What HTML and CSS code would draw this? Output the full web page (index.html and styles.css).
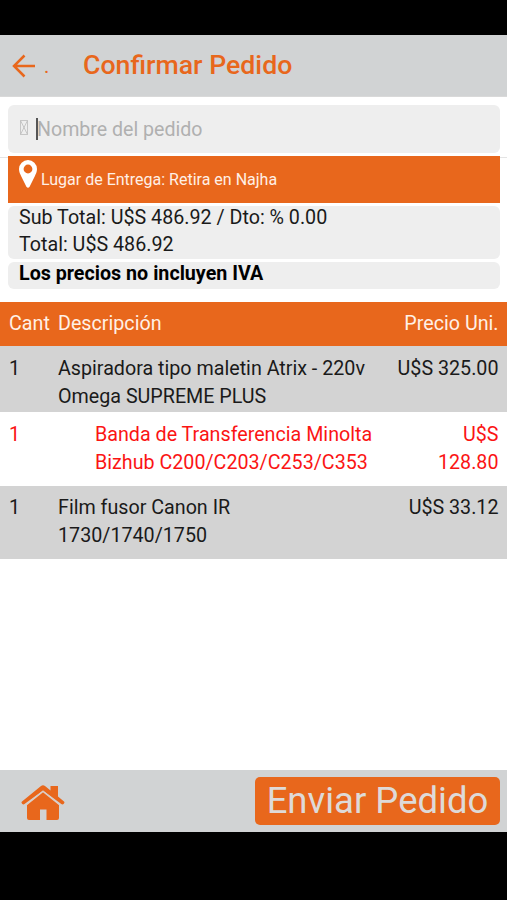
FILE: index.html
```html
<!DOCTYPE html>
<html lang="es">
<head>
<meta charset="utf-8">
<title>Confirmar Pedido</title>
<link rel="stylesheet" href="styles.css">
</head>
<body>
<div class="screen">
  <header class="topbar">
    <svg class="back" viewBox="0 0 24 24"><path d="M23 12H2M12.500 1.500L2 12l10.500 10.500"/></svg>
    <span class="dot">.</span>
    <h1>Confirmar Pedido</h1>
  </header>
  <main>
    <div class="field">
      <svg class="missing" viewBox="0 0 8 15"><path d="M.5.5h7v14h-7zL7.500 14.500M7.500.5L.5 14.500"/></svg>
      <span class="caret"></span>
      <span class="placeholder">Nombre del pedido</span>
    </div>
    <div class="divider"></div>
    <div class="delivery">
      <svg class="pin" viewBox="0 0 18 28"><path fill-rule="evenodd" d="M9 0a9 9 0 0 0-9 9c0 3 1.200 5 2.200 7.200L7.400 26.700q1.600 2.200 3.200 0L15.800 16.200C16.800 14 18 12 18 9a9 9 0 0 0-9-9zm0 4.600a4.400 4.400 0 1 1 0 8.800 4.400 4.400 0 0 1 0-8.800z"/></svg>
      <span>Lugar de Entrega: Retira en Najha</span>
    </div>
    <div class="totals">
      <div>Sub Total: U$S 486.92 / Dto: % 0.00</div>
      <div>Total: U$S 486.92</div>
    </div>
    <div class="notice">Los precios no incluyen IVA</div>
    <section class="items">
      <div class="row head"><span>Cant</span><span>Descripción</span><span class="price">Precio Uni.</span></div>
      <div class="row first"><span>1</span><span>Aspiradora tipo maletin Atrix - 220v<br>Omega SUPREME PLUS</span><span class="price">U$S 325.00</span></div>
      <div class="row offer"><span>1</span><span class="indent">Banda de Transferencia Minolta<br>Bizhub C200/C203/C253/C353</span><span class="price">U$S<br>128.80</span></div>
      <div class="row last"><span>1</span><span>Film fusor Canon IR<br>1730/1740/1750</span><span class="price">U$S 33.12</span></div>
    </section>
  </main>
  <footer>
    <svg class="home" viewBox="0 0 44 36"><path d="M6 19.500L22 6l16 13.500V33q0 2-2 2H25.500V24.500h-6.500V35H8q-2 0-2-2z"/><path d="M1 16.500L20 1q2-1.500 4 0l5.500 4.500V1h7.500v10.500l6 5q1 1-.2 2.200t-2.500.3L22 5.400 3.500 19q-1.200.9-2.400-.3t-.1-2.200z"/><path class="gap" d="M4.500 20.500L22 6.400 39.500 20.500"/></svg>
    <button class="send">Enviar Pedido</button>
  </footer>
</div>
</body>
</html>
```
FILE: styles.css
```css
* { box-sizing: border-box; }
body { margin: 0; background: #000; font-family: Roboto, "Liberation Sans", sans-serif; color: #1a1a1a; }
.screen { height: 900px; padding: 35px 0 68px; display: flex; flex-direction: column; white-space: nowrap; }
.topbar { height: 62px; flex: none; background: #d1d3d4; border-bottom: 1px solid #d9d9d9; display: flex; align-items: center; padding-left: 12px; color: #e8671c; }
.back { width: 24px; height: 24px; fill: none; stroke: #e8671c; stroke-width: 2.500; }
.dot { width: 39px; padding-left: 8px; font-size: 20px; line-height: 24px; }
h1 { margin: -2px 0 0 8px; font-size: 26.700px; font-weight: 500; line-height: 30px; }
main { flex: 1; background: #fff; padding-top: 8px; }
.field { height: 48px; margin: 0 7px 0 8px; background: #eee; border-radius: 6px; display: flex; align-items: center; padding-left: 12px; }
.missing { width: 8px; height: 15px; fill: none; stroke: #bbb; stroke-width: .8; margin-top: -3px; }
.caret { width: 2px; height: 22px; background: #555; margin-left: 8px; }
.placeholder { font-size: 19.600px; color: #b0b0b0; margin-left: -1px; }
.divider { height: 1px; margin-top: 4px; background: #e4e4e4; }
.delivery { position: relative; height: 47px; margin: -2px 7px 0 8px; background: #e8671c; color: #fff0e6; display: flex; align-items: flex-start; padding: 4px 0 0 11px; font-size: 16px; line-height: 40px; }
.pin { width: 18px; height: 28px; fill: #fff; margin-right: 4px; }
.totals { display: flow-root; height: 53px; margin: 3px 7px 0 8px; padding-left: 11px; background: #eee; border-radius: 6px; font-size: 19.700px; line-height: 26px; }
.totals div:first-child { margin-top: -1px; margin-bottom: 1px; }
.notice { height: 27px; margin: 3px 7px 0 8px; padding-left: 11px; background: #eee; border-radius: 6px; font-size: 19.700px; line-height: 24px; font-weight: 700; color: #000; }
.items { margin-top: 13px; font-size: 19.700px; line-height: 28px; }
.row { display: grid; grid-template-columns: 49px 1fr auto; padding: 8px 8.500px 0 9px; }
.price { text-align: right; }
.head { height: 44px; background: #e8671c; color: #fff0e6; }
.first { height: 66px; padding-top: 9px; background: #d3d3d3; }
.offer { height: 74px; padding-top: 9px; color: #fb1414; }
.indent { padding-left: 37px; }
.last { height: 73px; background: #d3d3d3; }
footer { height: 62px; flex: none; background: #d1d3d4; display: flex; justify-content: space-between; align-items: flex-start; padding: 7px 7px 0 21px; }
.home { width: 44px; height: 36px; margin-top: 8px; fill: #e8671c; }
.gap { fill: none; stroke: #dccfc8; stroke-width: 1.300; }
.send { width: 245px; height: 48px; border: 0; border-radius: 5px; padding: 0; background: #e8671c; color: #dedad8; font: 400 36.500px/46px Roboto, sans-serif; }
```
